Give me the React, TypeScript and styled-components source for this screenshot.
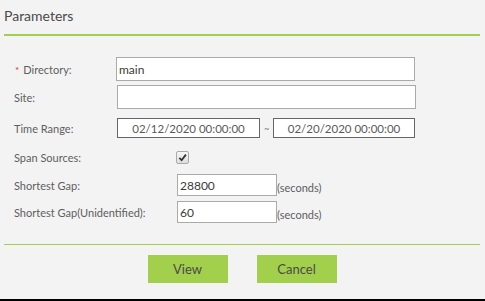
import React from 'react'
import styled, { createGlobalStyle } from 'styled-components'

const GlobalStyle = createGlobalStyle`
  html, body {
    margin: 0;
    padding: 0;
    background: #f3f3f3;
  }
  body {
    font-family: 'Lato', 'Open Sans', sans-serif;
    color: #444;
  }
`

const Panel = styled.div`
  width: 485px;
  height: 299px;
  border-bottom: 2px solid #000;
  display: flex;
  flex-direction: column;
  background: #f3f3f3;
`

const Header = styled.div`
  margin: 0 5px 0 4px;
  height: 34px;
  border-bottom: 2px solid #a2cf4c;
  display: flex;
  align-items: center;
`

const Title = styled.div`
  font-size: 14px;
  color: #4a4a4a;
  padding-bottom: 3px;
`

const Body = styled.div`
  flex: 1;
  padding: 21px 0 0 14px;
  display: flex;
  flex-direction: column;
`

const Row = styled.div<{ $h: number; $mt?: number; $labelWidth: number }>`
  display: grid;
  grid-template-columns: ${(p) => p.$labelWidth}px auto;
  align-items: center;
  height: ${(p) => p.$h}px;
  margin-top: ${(p) => p.$mt ?? 0}px;
`

const Label = styled.label`
  font-size: 11px;
  color: #5e5e5e;
`

const Required = styled.span`
  color: #e03030;
  margin-right: 4px;
  font-size: 10px;
  padding-left: 1px;
`

const TextInput = styled.input<{ $w: number }>`
  box-sizing: border-box;
  width: ${(p) => p.$w}px;
  height: 100%;
  margin: 0;
  border: 1px solid #aaa;
  background: #fff;
  padding: 0 2px;
  font-family: 'Lato', 'Open Sans', sans-serif;
  font-size: 12px;
  color: #3a3a3a;
  outline: none;
`

const DateRange = styled.div`
  display: flex;
  align-items: center;
  height: 100%;
`

const DateBox = styled.div<{ $w: number }>`
  box-sizing: border-box;
  width: ${(p) => p.$w}px;
  height: 100%;
  border: 1px solid #666;
  background: #fff;
  display: flex;
  align-items: center;
  justify-content: center;
  font-size: 11.5px;
  color: #5a5a5a;
`

const Tilde = styled.span`
  width: 13px;
  text-align: center;
  font-size: 9px;
  color: #777;
`

const Field = styled.div`
  display: flex;
  align-items: flex-end;
  height: 100%;
`

const Unit = styled.span`
  font-size: 11px;
  color: #5e5e5e;
  padding-bottom: 2px;
`

const Check = styled.span`
  box-sizing: border-box;
  width: 13px;
  height: 13px;
  border: 1px solid #aaa;
  border-radius: 2px;
  background: linear-gradient(#f6f6f6, #dedede);
  display: flex;
  align-items: center;
  justify-content: center;
  margin-left: 1px;
`

const Footer = styled.div`
  margin: 0 5px 0 4px;
  border-top: 1px solid #a2cf4c;
  height: 44px;
  display: flex;
  justify-content: center;
  align-items: flex-start;
  gap: 29px;
  padding-top: 10px;
`

const Button = styled.button`
  width: 80px;
  height: 28px;
  border: none;
  background: #a2cf4c;
  color: #4a4a4a;
  font-family: 'Lato', 'Open Sans', sans-serif;
  font-size: 13px;
  cursor: pointer;
`

export default function App(): JSX.Element {
  return (
    <>
      <GlobalStyle />
      <Panel>
        <Header>
          <Title>Parameters</Title>
        </Header>
        <Body>
          {/* general */}
          <Row $h={24} $labelWidth={102}>
            <Label>
              <Required>*</Required>Directory:
            </Label>
            <TextInput $w={299} defaultValue="main" />
          </Row>
          <Row $h={24} $mt={4} $labelWidth={103}>
            <Label>Site:</Label>
            <TextInput $w={299} defaultValue="" />
          </Row>
          <Row $h={20} $mt={9} $labelWidth={103}>
            <Label>Time Range:</Label>
            <DateRange>
              <DateBox $w={143}>02/12/2020 00:00:00</DateBox>
              <Tilde>~</Tilde>
              <DateBox $w={142}>02/20/2020 00:00:00</DateBox>
            </DateRange>
          </Row>

          {/* gap settings */}
          <Row $h={22} $mt={8} $labelWidth={161}>
            <Label>Span Sources:</Label>
            <Check>
              <svg width="9" height="9" viewBox="0 0 10 10">
                <path d="M1.5 5.5 L4 8 L8.8 1.8" fill="none" stroke="#333" strokeWidth="2" />
              </svg>
            </Check>
          </Row>
          <Row $h={22} $mt={6} $labelWidth={163}>
            <Label>Shortest Gap:</Label>
            <Field>
              <TextInput $w={100} defaultValue="28800" />
              <Unit>(seconds)</Unit>
            </Field>
          </Row>
          <Row $h={22} $mt={5} $labelWidth={163}>
            <Label>Shortest Gap(Unidentified):</Label>
            <Field>
              <TextInput $w={100} defaultValue="60" />
              <Unit>(seconds)</Unit>
            </Field>
          </Row>
        </Body>
        <Footer>
          <Button>View</Button>
          <Button>Cancel</Button>
        </Footer>
      </Panel>
    </>
  )
}
